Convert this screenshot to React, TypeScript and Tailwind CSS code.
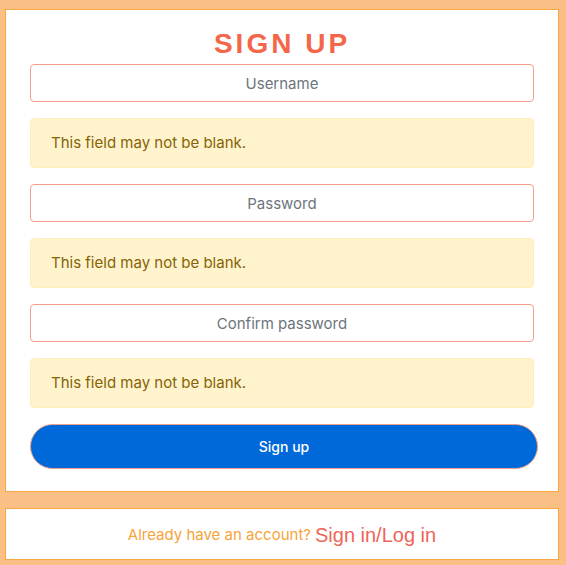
export default function App() {
  const fields = ["Username", "Password", "Confirm password"];

  return (
    <div className="min-h-[565px] w-[566px] bg-[#fbbf85] pt-[9px] font-['Inter',sans-serif]">
      <div className="ml-[5px] w-[554px] border border-[#f5a742] bg-white px-6 pb-[22px] pt-[18px]">
        <h1 className="mb-1 text-center font-['Liberation_Sans',sans-serif] text-[28px] font-bold leading-8 tracking-[3px] text-[#f4664a]">
          SIGN UP
        </h1>
        <form className="flex flex-col gap-4" onSubmit={(e) => e.preventDefault()}>
          {fields.map((f) => (
            <div key={f} className="flex flex-col gap-4">
              <input
                type={f === "Username" ? "text" : "password"}
                placeholder={f}
                className="h-[38px] w-full rounded border border-[#f0a08a] bg-white px-3 text-center text-[15px] text-[#495057] placeholder:text-[#6c757d] focus:outline-none"
              />
              <div className="flex h-[50px] items-center rounded border border-[#ffeeba] bg-[#fff3cd] px-5 text-[15px] text-[#856404]">
                This field may not be blank.
              </div>
            </div>
          ))}
          <button
            type="submit"
            className="h-[45px] w-[508px] rounded-full border border-[#f0a08a] bg-[#0069d9] text-[14px] font-medium text-white"
          >
            Sign up
          </button>
        </form>
      </div>

      <div className="ml-[5px] mt-4 flex h-[52px] w-[554px] items-center justify-center border border-[#f5a742] bg-white pt-[2px]">
        <span className="text-[15px] text-[#f6a43a]">Already have an account?</span>
        <a className="ml-1 font-['Liberation_Sans',sans-serif] text-[20px] text-[#ee6558]" href="#">
          Sign in/Log in
        </a>
      </div>
    </div>
  );
}
